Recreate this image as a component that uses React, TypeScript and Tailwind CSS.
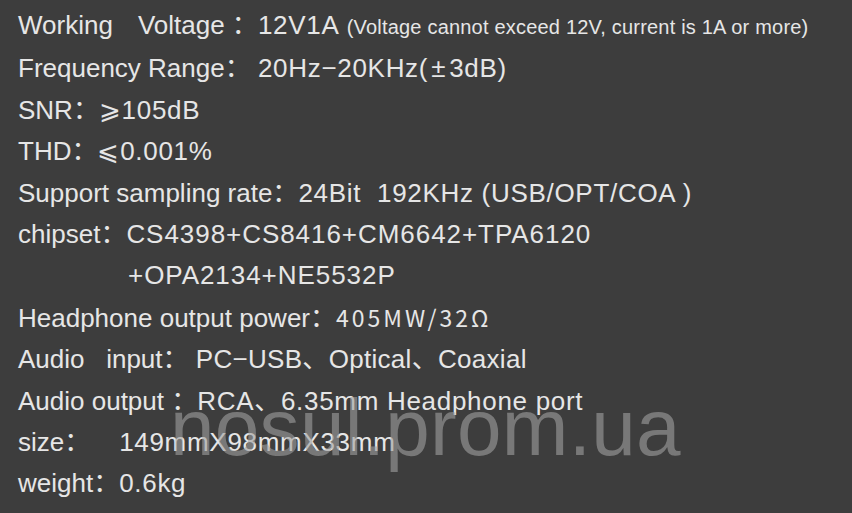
const V = ({ children }: { children: React.ReactNode }) => (
  <span className="tracking-[0.7px]">{children}</span>
);

export default function App() {
  return (
    <div className="relative w-[852px] h-[513px] overflow-hidden bg-[#3d3d3d] text-[#e6e6e6] font-['Liberation_Sans','Noto_Sans_CJK_SC',sans-serif] text-[26px]">
      <div className="flex flex-col pt-[5px] pl-[18px] whitespace-pre leading-[41.4px]">
        <div>
          Working<span className="ml-[25px]">Voltage ：</span>
          <V>12V1A</V>{" "}
          <span className="text-[20px] tracking-[0.2px]">(Voltage cannot exceed 12V, current is 1A or more)</span>
        </div>
        <div>
          Frequency Range： <V>20Hz−20KHz(<span className="mx-[3px]">±</span>3dB)</V>
        </div>
        <div>
          SNR：<V>⩾105dB</V>
        </div>
        <div>
          THD：<V>⩽0.001%</V>
        </div>
        <div>
          Support sampling rate：<V>24Bit  192KHz (USB/OPT/COA )</V>
        </div>
        <div>
          chipset：<span className="tracking-[0.95px]">CS4398+CS8416+CM6642+TPA6120</span>
        </div>
        <div className="pl-[110px]">
          <span className="tracking-[0.95px]">+OPA2134+NE5532P</span>
        </div>
        <div>
          Headphone output power：
          <span className="font-['Noto_Sans_CJK_SC',sans-serif] text-[23px] tracking-[3px]">405MW/32Ω</span>
        </div>
        <div>
          Audio   input： <span className="tracking-[0.3px]">PC−USB、Optical、Coaxial</span>
        </div>
        <div>
          Audio output ：<V>RCA、6.35mm Headphone port</V>
        </div>
        <div>
          size：    <V>149mmX98mmX33mm</V>
        </div>
        <div>
          weight：<V>0.6kg</V>
        </div>
      </div>
      {/* watermark */}
      <div className="absolute left-[170px] top-[388px] text-[80px] tracking-[0.3px] leading-none text-[rgba(160,160,160,0.6)] pointer-events-none select-none">
        nosul.prom.ua
      </div>
    </div>
  );
}
